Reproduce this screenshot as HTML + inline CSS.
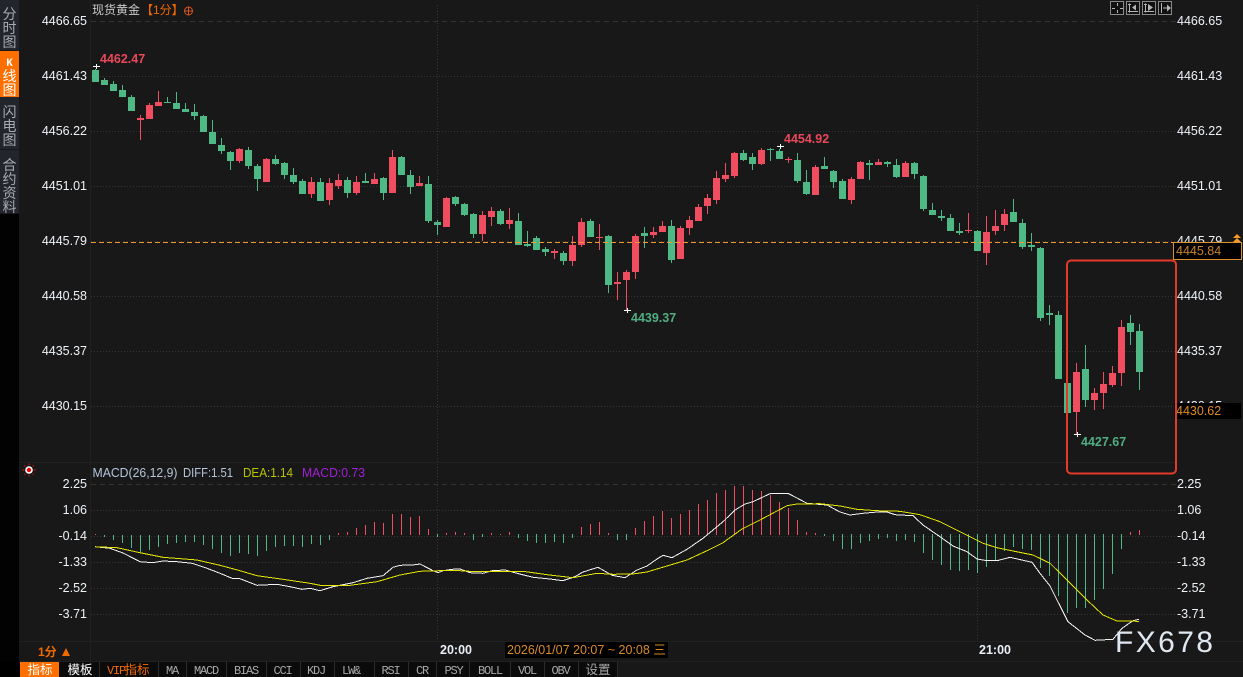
<!DOCTYPE html>
<html><head><meta charset="utf-8"><style>
html,body{margin:0;padding:0;background:#181818;overflow:hidden}
svg{display:block}
text{font-family:"Liberation Sans","Noto Sans CJK SC",sans-serif}
.ax{font-size:12.5px;fill:#eef3f8}
.b{font-size:12.5px;font-weight:bold}
.sd{font-size:14px;fill:#a8aaae;text-anchor:middle}
.tb{font-family:"Liberation Mono","Noto Sans CJK SC",monospace;font-size:12px;fill:#a8a8a8;text-anchor:middle;letter-spacing:-1.2px}
.tc{font-size:12.5px;text-anchor:middle;fill:#fff}
</style></head><body>
<svg width="1243" height="677" viewBox="0 0 1243 677" xmlns="http://www.w3.org/2000/svg">
<rect width="1243" height="677" fill="#181818"/>
<!-- sidebar -->
<rect x="0" y="214" width="19" height="448" fill="#020202"/>
<rect x="0" y="0" width="19" height="50" fill="#23252d"/>
<rect x="0" y="97" width="19" height="52" fill="#23252d"/>
<rect x="0" y="150" width="19" height="63" fill="#23252d"/>
<rect x="0" y="51" width="19" height="46" fill="#ff6f00"/>
<text class="sd" x="9.5" y="19">分</text><text class="sd" x="9.5" y="33">时</text><text class="sd" x="9.5" y="47">图</text>
<text x="9.5" y="66" style="font-family:'Liberation Mono',monospace;font-weight:bold;font-size:11px;fill:#fff;text-anchor:middle">K</text>
<text class="sd" style="fill:#fff" x="9.5" y="81">线</text><text class="sd" style="fill:#fff" x="9.5" y="95">图</text>
<text class="sd" x="9.5" y="117">闪</text><text class="sd" x="9.5" y="131">电</text><text class="sd" x="9.5" y="145">图</text>
<text class="sd" x="9.5" y="170">合</text><text class="sd" x="9.5" y="184">约</text><text class="sd" x="9.5" y="198">资</text><text class="sd" x="9.5" y="212">料</text>
<!-- faint frame -->
<path d="M90.5 0V661M19 462.5H1176M19 641.5H1243M19 661.5H1243" stroke="#202020" fill="none" shape-rendering="crispEdges"/>
<!-- grid -->
<path d="M91 21.5H1176M91 484.5H1176" stroke="#333" stroke-dasharray="5 4" fill="none" shape-rendering="crispEdges"/>
<path d="M91 76.5H1176M91 131.5H1176M91 186.5H1176M91 241.5H1176M91 296.5H1176M91 351.5H1176M91 406.5H1176M91 510.5H1176M91 536.5H1176M91 562.5H1176M91 588.5H1176M91 614.5H1176" stroke="#363636" stroke-dasharray="1 2" fill="none" shape-rendering="crispEdges"/>
<path d="M437.5 5V641M977.5 5V641" stroke="#363636" stroke-dasharray="1 2" fill="none" shape-rendering="crispEdges"/>
<!-- green wicks -->
<path fill="none" stroke="#4fb985" stroke-width="1" shape-rendering="crispEdges" d="M95.5 69V82M104.5 78V85M113.5 81V91M122.5 85V97M131.5 95V111M167.5 97V103M176.5 92V109M185.5 103V112M194.5 104V120M203.5 115V132M212.5 120V144M221.5 138V154M230.5 151V170M248.5 147V169M257.5 164V191M275.5 155V165M284.5 162V179M293.5 168V184M302.5 179V194M320.5 178V201M347.5 177V198M365.5 173V183M383.5 177V200M401.5 156V175M410.5 170V194M428.5 176V223M437.5 220V235M455.5 196V206M464.5 203V216M473.5 213V238M500.5 209V225M518.5 213V245M527.5 231V247M536.5 236V250M545.5 247V256M563.5 251V265M590.5 219V237M608.5 235V293M644.5 227V248M671.5 220V263M743.5 150V161M752.5 153V170M770.5 148V161M779.5 149V159M797.5 153V183M806.5 170V195M824.5 157V169M833.5 170V188M842.5 179V199M869.5 160V180M887.5 161V167M896.5 159V178M914.5 162V179M923.5 175V211M932.5 203V215M941.5 210V221M950.5 214V231M959.5 223V235M977.5 230V251M1013.5 199V222M1022.5 219V249M1031.5 233V251M1040.5 247V321M1049.5 305V325M1058.5 311V379M1085.5 345V407M1130.5 315V345M1139.5 324V390"/>
<!-- green bodies -->
<path fill="none" stroke="#4fb985" stroke-width="7" shape-rendering="crispEdges" d="M95.5 70V82M104.5 80V85M113.5 84V91M122.5 90V97M131.5 97V111M167.5 102V103M176.5 103V109M185.5 109V112M194.5 112V116M203.5 116V132M212.5 132V144M221.5 145V151M230.5 152V161M248.5 150V166M257.5 166V179M275.5 159V164M284.5 163V175M293.5 175V182M302.5 181V194M320.5 182V201M347.5 180V193M365.5 181V183M383.5 178V193M401.5 157V175M410.5 175V187M428.5 184V221M437.5 222V225M455.5 197V204M464.5 204V215M473.5 214V234M500.5 211V224M518.5 221V245M527.5 244V246M536.5 238V250M545.5 249V252M563.5 253V261M590.5 221V237M608.5 236V285M644.5 233V236M671.5 226V260M743.5 153V160M752.5 157V164M770.5 149V150M779.5 151V159M797.5 160V181M806.5 182V194M824.5 166V169M833.5 171V182M842.5 181V199M869.5 163V165M887.5 162V164M896.5 165V177M914.5 163V174M923.5 176V209M932.5 210V215M941.5 216V218M950.5 218V231M959.5 231V233M977.5 231V251M1013.5 212V222M1022.5 223V247M1031.5 245V247M1040.5 248V318M1049.5 313V315M1058.5 315V379M1067.5 383V413M1085.5 369V400M1130.5 323V332M1139.5 331V372"/>
<!-- red wicks -->
<path fill="none" stroke="#f04e60" stroke-width="1" shape-rendering="crispEdges" d="M140.5 115V140M149.5 103V119M158.5 91V106M239.5 148V163M266.5 158V182M311.5 177V198M329.5 178V205M338.5 174V189M356.5 176V195M374.5 173V184M392.5 150V193M419.5 176V186M446.5 197V227M482.5 211V241M491.5 207V226M509.5 208V229M554.5 249V259M572.5 236V266M581.5 218V247M599.5 224V250M617.5 272V300M626.5 270V310M635.5 234V279M653.5 227V238M662.5 221V232M680.5 226V259M689.5 216V235M698.5 204V221M707.5 194V214M716.5 171V204M725.5 163V182M734.5 152V178M761.5 148V165M788.5 157V163M815.5 165V195M851.5 177V204M860.5 161V179M878.5 159V165M905.5 161V177M968.5 213V233M986.5 216V265M995.5 210V235M1004.5 209V231M1076.5 363V434M1094.5 388V410M1103.5 372V409M1112.5 366V387M1121.5 320V386"/>
<!-- red bodies -->
<path fill="none" stroke="#f04e60" stroke-width="7" shape-rendering="crispEdges" d="M140.5 118V120M149.5 105V119M158.5 102V106M239.5 149V161M266.5 159V182M311.5 182V194M329.5 183V200M338.5 180V186M356.5 182V193M374.5 179V184M392.5 157V193M419.5 183V186M446.5 198V227M482.5 215V234M491.5 211V217M509.5 220V224M554.5 251V253M572.5 245V261M581.5 222V245M599.5 237V238M617.5 282V284M626.5 272V280M635.5 236V272M653.5 232V235M662.5 226V232M680.5 228V259M689.5 220V228M698.5 207V221M707.5 198V206M716.5 178V200M725.5 175V179M734.5 153V176M761.5 150V164M788.5 159V160M815.5 167V195M851.5 179V200M860.5 162V179M878.5 162V165M905.5 163V177M968.5 230V231M986.5 232V253M995.5 226V231M1004.5 214V225M1076.5 372V412M1094.5 393V400M1103.5 384V393M1112.5 373V385M1121.5 327V373"/>
<!-- white extremum crosses -->
<path d="M93 66.5H100M96.5 64V69M777 146.5H784M780.5 144V149M624 310.5H631M627.5 308V313M1074 434.5H1081M1077.5 432V437" stroke="#fff" fill="none" shape-rendering="crispEdges"/>
<!-- orange dashed current line -->
<path d="M91 242.5H1174" stroke="#f39a2b" stroke-dasharray="5 3" fill="none" shape-rendering="crispEdges"/>
<!-- left axis -->
<g class="ax" text-anchor="end">
<text x="87" y="25">4466.65</text><text x="87" y="80">4461.43</text><text x="87" y="135">4456.22</text><text x="87" y="190">4451.01</text><text x="87" y="245">4445.79</text><text x="87" y="300">4440.58</text><text x="87" y="355">4435.37</text><text x="87" y="410">4430.15</text>
<text x="87" y="488">2.25</text><text x="87" y="514">1.06</text><text x="87" y="540">-0.14</text><text x="87" y="566">-1.33</text><text x="87" y="592">-2.52</text><text x="87" y="618">-3.71</text>
</g>
<!-- right axis -->
<g class="ax">
<text x="1177" y="25">4466.65</text><text x="1177" y="80">4461.43</text><text x="1177" y="135">4456.22</text><text x="1177" y="190">4451.01</text><text x="1177" y="245">4445.79</text><text x="1177" y="300">4440.58</text><text x="1177" y="355">4435.37</text><text x="1177" y="410">4430.15</text>
<text x="1177" y="488">2.25</text><text x="1177" y="514">1.06</text><text x="1177" y="540">-0.14</text><text x="1177" y="566">-1.33</text><text x="1177" y="592">-2.52</text><text x="1177" y="618">-3.71</text>
</g>
<!-- price tags -->
<rect x="1173.5" y="242.5" width="68" height="17" fill="#000" stroke="#e0912f" shape-rendering="crispEdges"/>
<text x="1176" y="255" style="font-size:12.5px;fill:#c9822a">4445.84</text>
<path d="M1237 234l4 4h-8zM1237 238l4 4h-8z" fill="#f39a2b"/>
<rect x="1174" y="403" width="67" height="16" fill="#000"/>
<text x="1176" y="415" style="font-size:12.5px;fill:#e08a20">4430.62</text>
<!-- annotation rect -->
<rect x="1067" y="260.5" width="109" height="213" rx="4" ry="4" fill="none" stroke="#e5392a" stroke-width="2"/>
<!-- title -->
<text x="92" y="14" style="font-size:12px;fill:#c9c9c9">现货黄金</text>
<text x="141" y="14" style="font-size:12px;fill:#f56a00">【1分】</text>
<circle cx="188.500" cy="11" r="4" fill="none" stroke="#d9531e"/><path d="M184 11h9M188.500 6.500v9" stroke="#d9531e" fill="none"/>
<!-- extreme labels -->
<text class="b" x="100" y="63" style="fill:#e8485a">4462.47</text>
<text class="b" x="784" y="143" style="fill:#e8485a">4454.92</text>
<text class="b" x="631" y="322" style="fill:#4fae82">4439.37</text>
<text class="b" x="1081" y="446" style="fill:#4fae82">4427.67</text>
<!-- top right icons -->
<g fill="#111" stroke="#8a8a8a" shape-rendering="crispEdges">
<rect x="1110.500" y="1.500" width="13" height="13"/><rect x="1126.500" y="1.500" width="13" height="13"/><rect x="1142.500" y="1.500" width="13" height="13"/><rect x="1158.500" y="1.500" width="13" height="13"/>
</g>
<path d="M1117.500 3v3M1117.500 10v3M1112 8.500h3M1120 8.500h3M1129.500 3.500v9M1128 11.500h10M1128 4.500h3M1145.500 3.500v9M1144 11.500h10M1144 4.500h3M1161.500 3v10M1163 8h5" stroke="#b5b5b5" fill="none" shape-rendering="crispEdges"/>
<path d="M1132 7.500l4-3v6zM1153 7.500l-5-3.500v7zM1171 8l-4-3.500v7z" fill="#b5b5b5"/>
<!-- MACD legend -->
<circle cx="29" cy="470" r="3.800" fill="#fff"/><circle cx="29" cy="470" r="2.200" fill="#e00"/>
<path d="M29 463.500v1.500M29 475v1.500M22.500 470h1.500M34 470h1.500M24.400 465.400l1 1M32.600 473.600l1 1M33.600 465.400l-1 1M25.400 473.600l-1 1" stroke="#e01010" fill="none"/>
<text x="92.500" y="477" textLength="85" lengthAdjust="spacingAndGlyphs" style="font-size:12.5px;fill:#b4c6da">MACD(26,12,9)</text>
<text x="183" y="477" textLength="50" lengthAdjust="spacingAndGlyphs" style="font-size:12.5px;fill:#b4c6da">DIFF:1.51</text>
<text x="243" y="477" textLength="50" lengthAdjust="spacingAndGlyphs" style="font-size:12.5px;fill:#b8c400">DEA:1.14</text>
<text x="302" y="477" textLength="63" lengthAdjust="spacingAndGlyphs" style="font-size:12.5px;fill:#a41fd8">MACD:0.73</text>
<!-- MACD hist green -->
<path fill="none" stroke="#4fb985" shape-rendering="crispEdges" d="M104.500 535V537M113.500 535V540M122.500 535V543M131.500 535V548M140.500 535V552M149.500 535V550M158.500 535V547M167.500 535V544M176.500 535V543M185.500 535V542M194.500 535V542M203.500 535V545M212.500 535V549M221.500 535V553M230.500 535V556M239.500 535V553M248.500 535V554M257.500 535V556M266.500 535V551M275.500 535V547M284.500 535V546M293.500 535V546M302.500 535V547M311.500 535V544M320.500 535V545M329.500 535V540M437.500 534V537M473.500 534V540M482.500 534V537M518.500 534V538M527.500 534V541M536.500 534V543M545.500 534V543M554.500 534V542M563.500 534V543M572.500 534V538M617.500 534V540M626.500 534V540M824.500 534V536M833.500 534V541M842.500 534V549M851.500 534V549M860.500 534V543M869.500 534V541M878.500 534V539M887.500 534V538M896.500 534V541M905.500 534V540M914.500 534V542M923.500 534V553M932.500 534V560M941.500 534V565M950.500 534V570M959.500 534V571M968.500 534V570M977.500 534V573M986.500 534V567M995.500 534V561M1004.500 534V551M1013.500 534V547M1022.500 534V549M1031.500 534V550M1040.500 534V568M1049.500 534V576M1058.500 534V596M1067.500 534V613M1076.500 534V608M1085.500 534V608M1094.500 534V600M1103.500 534V589M1112.500 534V574M1121.500 534V549"/>
<!-- MACD hist red -->
<path fill="none" stroke="#f04e60" shape-rendering="crispEdges" d="M95.500 534V535M338.500 533V535M347.500 532V535M356.500 528V535M365.500 525V535M374.500 522V535M383.500 523V535M392.500 514V535M401.500 514V535M410.500 517V535M419.500 516V535M428.500 529V535M446.500 533V535M455.500 532V535M464.500 533V535M491.500 533V535M500.500 534V535M509.500 532V535M581.500 527V535M590.500 524V535M599.500 522V535M608.500 533V535M635.500 528V535M644.500 521V535M653.500 516V535M662.500 511V535M671.500 518V535M680.500 514V535M689.500 510V535M698.500 504V535M707.500 500V535M716.500 493V535M725.500 490V535M734.500 486V535M743.500 486V535M752.500 490V535M761.500 491V535M770.500 495V535M779.500 502V535M788.500 508V535M797.500 520V535M806.500 532V535M815.500 533V535M1130.500 532V535M1139.500 530V535"/>
<!-- DIFF -->
<polyline fill="none" stroke="#f4f4f4" stroke-width="1" shape-rendering="crispEdges" points="95,546.700 110,548.300 123,553 140,561.700 153,562.700 163,561 177,561.700 192,563.300 207,568.300 220,573.300 232,578.300 240,578.700 257,585.300 277,584.300 290,586.700 302,589.300 310,588.300 320,590.700 333,586.700 353,582.700 367,578.300 383,575.700 393,567.300 400,565.300 413,565 420,564 433,570.700 438,572.700 443,570.700 452,569.300 460,569 470,572.700 483,573.300 492,570.700 505,570 517,573.300 533,577.300 550,579 563,580.700 575,576.700 583,572 598,567.300 612,575.300 625,577.700 637,570 647,566 657,559 663,555.300 672,557.700 687,549.300 703,538.300 723,521.700 735,510 745,504 753,501.700 770,493.700 788,493.300 807,503.300 827,505 840,512 850,515 863,513.300 877,512 887,512 895,514.700 913,515.700 923,525 940,536.700 953,546 967,551.700 977,559 987,560.700 997,560.700 1010,557.300 1032,562.300 1040,573.300 1050,586 1068,621.700 1085,635 1095,640.300 1113,639.300 1122,628.300 1133,620.700 1139,619.300"/>
<!-- DEA -->
<polyline fill="none" stroke="#e6e600" stroke-width="1" shape-rendering="crispEdges" points="95,546.700 117,547.700 140,552.700 163,557.300 197,560 220,565.300 240,570.700 257,575.700 283,579.300 310,583.300 320,585.300 350,585.300 377,581.700 400,575 420,571.300 453,570.300 470,571.300 523,571.300 547,574.700 573,577.700 597,573.300 613,574.300 633,574 647,572 667,566 687,560 707,550.700 723,542.700 742,529 760,520 787,505.700 797,504 820,503.700 840,506 857,509.300 877,510.700 900,511.300 920,514.700 940,521.700 963,533.300 983,543.300 997,547.700 1013,551 1033,555 1050,563.300 1067,580 1087,600 1103,615 1117,621 1139,621.300"/>
<!-- time axis -->
<text x="38" y="656" style="font-size:12px;font-weight:bold;fill:#f06a00">1分</text>
<path d="M62 656l4-8 4 8z" fill="#f06a00"/>
<text class="b" x="440" y="654" style="fill:#e9eff6">20:00</text>
<text class="b" x="979" y="654" style="fill:#e9eff6">21:00</text>
<rect x="505" y="642" width="163" height="16" fill="#000"/>
<text x="507" y="654" style="font-size:12.5px;fill:#d98a2a">2026/01/07 20:07 ~ 20:08 三</text>
<text x="1115" y="652" style="font-size:30px;letter-spacing:2.400px;fill:#dfe7f1">FX678</text>
<!-- bottom tabs -->
<rect x="0" y="662" width="617" height="15" fill="#0b0b0b"/>
<rect x="0" y="662" width="20" height="15" fill="#000"/>
<rect x="20" y="662" width="39" height="15" fill="#ff6f00"/>
<path d="M99.500 662V677M158.500 662V677M186.500 662V677M226.500 662V677M266.500 662V677M300.500 662V677M334.500 662V677M374.500 662V677M408.500 662V677M436.500 662V677M469.500 662V677M510.500 662V677M544.500 662V677M578.500 662V677M617.500 662V677" stroke="#2c2c2c" fill="none" shape-rendering="crispEdges"/>
<text class="tc" x="40" y="674">指标</text>
<text class="tc" x="80" y="674">模板</text>
<text class="tb" x="116" y="674" style="fill:#f06a00">VIP</text>
<text class="tc" x="137" y="674" style="fill:#f06a00">指标</text>
<text class="tb" x="172" y="674">MA</text><text class="tb" x="206" y="674">MACD</text><text class="tb" x="246" y="674">BIAS</text><text class="tb" x="282.500" y="674">CCI</text><text class="tb" x="316" y="674">KDJ</text><text class="tb" x="351" y="674">LW&amp;</text><text class="tb" x="390.500" y="674">RSI</text><text class="tb" x="422" y="674">CR</text><text class="tb" x="453.500" y="674">PSY</text><text class="tb" x="490" y="674">BOLL</text><text class="tb" x="527" y="674">VOL</text><text class="tb" x="560.500" y="674">OBV</text>
<text class="tc" x="598" y="674" style="fill:#a8a8a8">设置</text>
</svg>
</body></html>
